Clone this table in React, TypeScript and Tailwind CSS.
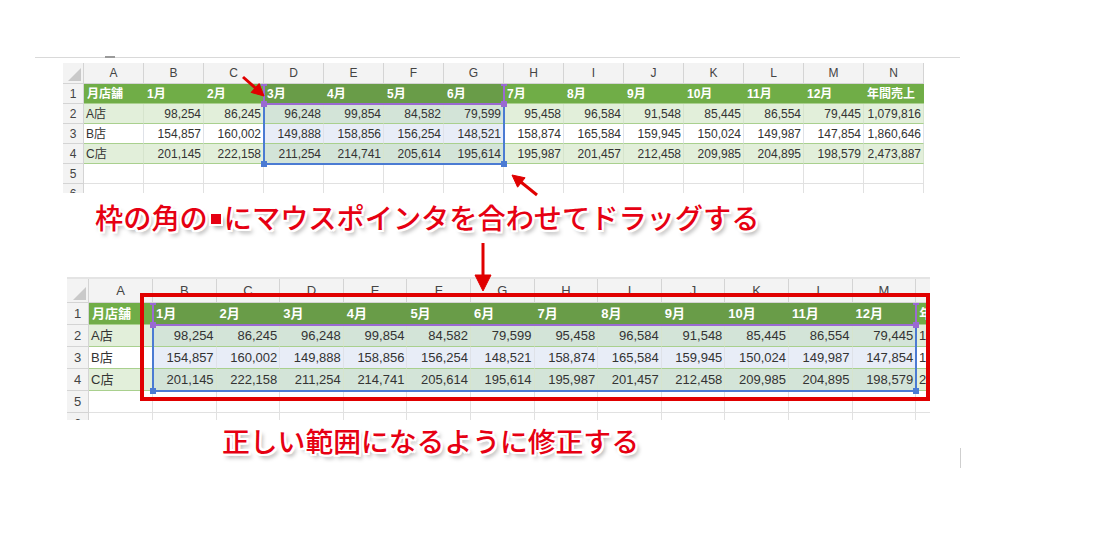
import React from 'react';

const LETTERS = ['A', 'B', 'C', 'D', 'E', 'F', 'G', 'H', 'I', 'J', 'K', 'L', 'M', 'N'];

const STORES = [
  { name: 'A店', sales: [98254, 86245, 96248, 99854, 84582, 79599, 95458, 96584, 91548, 85445, 86554, 79445] },
  { name: 'B店', sales: [154857, 160002, 149888, 158856, 156254, 148521, 158874, 165584, 159945, 150024, 149987, 147854] },
  { name: 'C店', sales: [201145, 222158, 211254, 214741, 205614, 195614, 195987, 201457, 212458, 209985, 204895, 198579] },
];

const fmt = (n: number) => n.toLocaleString('en-US');

interface SheetConfig {
  box: string;
  rowHead: string;
  colA: string;
  col: string;
  headH: string;
  rowH: string;
  text: string;
  selFrom: number;
  selTo: number;
  purple: string;
  blue: string;
}

const TOP: SheetConfig = {
  box: 'w-[861px] h-[130px] ml-[63px] mt-[5px]',
  rowHead: 'w-[21px]',
  colA: 'w-[60px]',
  col: 'w-[60px]',
  headH: 'h-[21px]',
  rowH: 'h-[20px]',
  text: 'text-[12px]',
  selFrom: 3,
  selTo: 6,
  purple: 'left-[200px] top-[21px] w-[242px] h-[21px]',
  blue: 'left-[200px] top-[41px] w-[242px] h-[61px]',
};

const BOTTOM: SheetConfig = {
  box: 'w-[863px] h-[143px] ml-[67px] mt-[44px] border-t-2 border-[#e4e4e4]',
  rowHead: 'w-[22px]',
  colA: 'w-[64px]',
  col: 'w-[63.6px]',
  headH: 'h-[24px]',
  rowH: 'h-[22px]',
  text: 'text-[13px]',
  selFrom: 1,
  selTo: 12,
  purple: 'left-[85px] top-[24px] w-[765px] h-[23px]',
  blue: 'left-[85px] top-[46px] w-[765px] h-[67px]',
};

// text of one cell, r = sheet row (1..6), c = column index (0 = A)
function cellText(r: number, c: number): string {
  if (r === 1) {
    if (c === 0) return '月店舗';
    if (c === 13) return '年間売上';
    return `${c}月`;
  }
  if (r >= 2 && r <= 4) {
    const s = STORES[r - 2];
    if (c === 0) return s.name;
    if (c === 13) return fmt(s.sales.reduce((a, b) => a + b, 0));
    return fmt(s.sales[c - 1]);
  }
  return '';
}

function cellClass(r: number, c: number, sel: boolean): string {
  if (r === 1) {
    return sel
      ? 'bg-[#699c48] text-white font-bold border-b border-[#8fbf6d] justify-start pl-[3px]'
      : 'bg-[#70ad47] text-white font-bold border-b border-[#a9d08e] justify-start pl-[3px]';
  }
  const align = c === 0 ? 'justify-start pl-[2px]' : 'justify-end pr-[2px]';
  if (r === 2 || r === 4) {
    return `${sel ? 'bg-[#d3e4d8]' : 'bg-[#e2efda]'} border-b border-r border-b-[#a9d08e] border-r-[#d6e4cd] text-[#333] ${align}`;
  }
  if (r === 3) {
    return `${sel ? 'bg-[#e8edf7]' : 'bg-white'} border-b border-r border-b-[#a9d08e] border-r-[#dfe2e8] text-[#333] ${align}`;
  }
  return 'bg-white border-b border-r border-[#e1e1e1]';
}

function Handle({ pos }: { pos: string }) {
  return <div className={`absolute w-[6px] h-[6px] ${pos}`} />;
}

function Sheet({ cfg }: { cfg: SheetConfig }) {
  const cols = Array.from({ length: 14 }, (_, i) => i);
  const rows = [1, 2, 3, 4, 5, 6];
  const w = (c: number) => (c === 0 ? cfg.colA : cfg.col);

  return (
    <div className={`relative overflow-hidden shrink-0 ${cfg.box} ${cfg.text} font-['Liberation_Sans','Noto_Sans_CJK_JP',sans-serif]`}>
      <div className="flex">
        <div className={`${cfg.rowHead} ${cfg.headH} shrink-0 bg-[#f3f3f3] border-r border-b border-[#d4d4d4] flex items-end justify-end p-[2px]`}>
          <svg width="13" height="13" viewBox="0 0 13 13">
            <polygon points="13,0 13,13 0,13" fill="#c9c9c9" />
          </svg>
        </div>
        {cols.map((c) => (
          <div
            key={c}
            className={`${w(c)} ${cfg.headH} shrink-0 bg-[#f3f3f3] border-r border-b border-[#d4d4d4] flex items-center justify-center text-[#444]`}
          >
            {LETTERS[c]}
          </div>
        ))}
      </div>
      {rows.map((r) => (
        <div key={r} className="flex">
          <div className={`${cfg.rowHead} ${cfg.rowH} shrink-0 bg-[#f3f3f3] border-r border-b border-[#d4d4d4] flex items-center justify-center text-[#444]`}>
            {r}
          </div>
          {cols.map((c) => {
            const sel = c >= cfg.selFrom && c <= cfg.selTo;
            return (
              <div
                key={c}
                className={`${w(c)} ${cfg.rowH} shrink-0 flex items-center whitespace-nowrap overflow-hidden ${cellClass(r, c, sel)}`}
              >
                {cellText(r, c)}
              </div>
            );
          })}
        </div>
      ))}

      {/* selection: header row in purple, data block in blue */}
      <div className={`absolute border-x-2 border-b-2 border-[#4b7bd3] ${cfg.blue}`}>
        <Handle pos="-left-[4px] -bottom-[4px] bg-[#4b7bd3]" />
        <Handle pos="-right-[4px] -bottom-[4px] bg-[#4b7bd3]" />
      </div>
      <div className={`absolute border-x-2 border-b-2 border-[#9a6ad2] ${cfg.purple}`}>
        <div className="absolute -left-[4px] top-0 w-[6px] h-[2px] bg-[#9a6ad2]" />
        <div className="absolute -right-[4px] top-0 w-[6px] h-[2px] bg-[#9a6ad2]" />
        <Handle pos="-left-[4px] -bottom-[4px] bg-[#9a6ad2]" />
        <Handle pos="-right-[4px] -bottom-[4px] bg-[#9a6ad2]" />
      </div>
    </div>
  );
}

const CAPTION =
  "text-[#e60012] font-['Noto_Sans_CJK_JP',sans-serif] font-medium whitespace-nowrap [text-shadow:2px_0_0_#fff,-2px_0_0_#fff,0_2px_0_#fff,0_-2px_0_#fff,2px_2px_0_#fff,-2px_-2px_0_#fff,2px_-2px_0_#fff,-2px_2px_0_#fff,3px_4px_4px_rgba(0,0,0,0.35)]";

export default function App() {
  return (
    <div className="relative w-[1116px] h-[537px] bg-white overflow-hidden flex flex-col">
      <div className="relative ml-[35px] mt-[57px] w-[925px] h-px bg-[#d9d9d9]">
        <div className="absolute left-[70px] -top-px w-[10px] h-[2px] bg-[#9a9a9a]" />
      </div>

      <Sheet cfg={TOP} />

      <div className={`ml-[95px] mt-[8px] h-[32px] leading-[32px] text-[28.2px] ${CAPTION}`}>
        枠の角の<span className="inline-block align-middle relative -top-[2px] mx-[3px] w-[10px] h-[10px] bg-[#e60012] shadow-[0_0_0_2px_#fff,3px_4px_4px_rgba(0,0,0,0.35)]" />にマウスポインタを合わせてドラッグする
      </div>

      <Sheet cfg={BOTTOM} />

      <div className={`ml-[222px] mt-[3px] h-[34px] leading-[34px] text-[27.8px] ${CAPTION}`}>
        正しい範囲になるように修正する
      </div>

      {/* red frame around the corrected range */}
      <div className="absolute left-[140px] top-[293px] w-[790px] h-[108px] border-4 border-[#e00000]" />

      <div className="absolute left-[960px] top-[448px] w-px h-[20px] bg-[#cfcfcf]" />

      {/* arrows */}
      <svg className="absolute inset-0 pointer-events-none" width="1116" height="537">
        <g fill="#e00000" stroke="#e00000">
          <line x1="243" y1="77" x2="257" y2="89.5" strokeWidth="3" />
          <polygon points="264,96 259.1,83.6 251.1,92.4" strokeWidth="1" />

          <line x1="537" y1="195" x2="519" y2="180.5" strokeWidth="3" />
          <polygon points="512,175 525.1,177.8 517.6,187.2" strokeWidth="1" />

          <line x1="483" y1="243" x2="483" y2="278" strokeWidth="3" />
          <polygon points="475,275 491,275 483,291" strokeWidth="1" />
        </g>
      </svg>
    </div>
  );
}
